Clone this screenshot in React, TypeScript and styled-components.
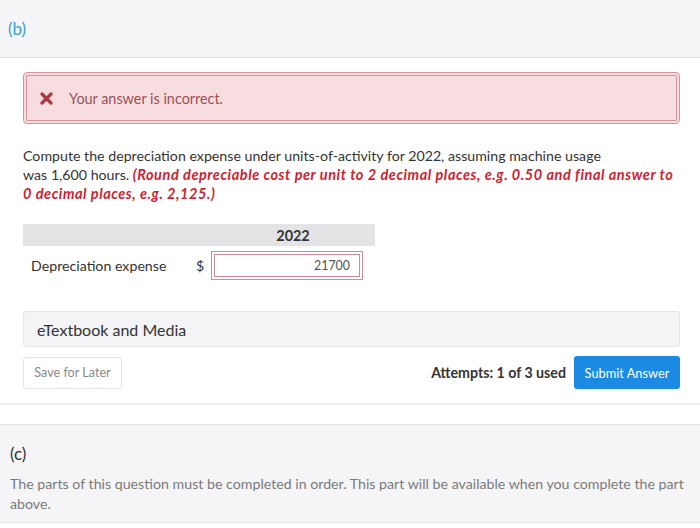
import React from 'react'
import styled, { createGlobalStyle } from 'styled-components'

const GlobalStyle = createGlobalStyle`
  body {
    margin: 0;
    background: #ffffff;
    font-family: Lato, 'Open Sans', sans-serif;
    color: #333333;
  }
`

const Page = styled.div`
  width: 700px;
  height: 528px;
  overflow: hidden;
`

const PartHeader = styled.div`
  height: 57px;
  display: flex;
  align-items: center;
  padding-left: 8px;
  background-color: #f5f5f7;
  border-bottom: 1px solid #e4e4e7;
  color: #3b9ec9;
  font-size: 17px;
`

const PartBody = styled.section`
  padding: 14px 20px 0 23px;
  border-bottom: 2px solid #ececee;
  height: 347px;
  box-sizing: border-box;
`

const ErrorBox = styled.div`
  height: 52px;
  box-sizing: border-box;
  display: flex;
  align-items: center;
  gap: 16px;
  padding-left: 13px;
  border: 4px double #d4939b;
  border-radius: 4px;
  background-color: #f7dde0;
  color: #9c5058;
  font-size: 14.4px;
`

const Prompt = styled.p`
  margin: 22px -12px 0 0;
  font-size: 14.2px;
  line-height: 19px;
  color: #333333;
`

const HintLine = styled.span`
  white-space: nowrap;
`

const Hint = styled.strong`
  font-style: italic;
  font-size: 14.5px;
  line-height: 19px;
  letter-spacing: 0.55px;
  color: #d0212f;
`

const Table = styled.div`
  margin-top: 21px;
  width: 352px;
  display: grid;
  grid-template-columns: 166px 22px 164px;
`

const HeadCell = styled.div`
  height: 22px;
  background-color: #e4e4e6;
  display: flex;
  align-items: center;
  justify-content: center;
  font-weight: 700;
  font-size: 14.4px;
  color: #333333;
`

const RowLabel = styled.div`
  display: flex;
  align-items: center;
  height: 38px;
  padding-left: 8px;
  font-size: 14.2px;
`

const Dollar = styled.div`
  display: flex;
  align-items: center;
  height: 38px;
  padding-left: 7px;
  font-size: 14.2px;
`

const InputWrap = styled.div`
  display: flex;
  align-items: center;
  height: 38px;
`

const AnswerInput = styled.div`
  width: 152px;
  height: 29px;
  box-sizing: border-box;
  border: 4px double #d08a94;
  display: flex;
  align-items: center;
  justify-content: flex-end;
  padding-right: 9px;
  font-size: 12.4px;
  color: #555555;
`

const MediaBar = styled.div`
  margin-top: 27px;
  height: 36px;
  box-sizing: border-box;
  border: 1px solid #e6e6e8;
  border-radius: 3px;
  background-color: #f4f4f6;
  display: flex;
  align-items: center;
  padding-left: 13px;
  font-size: 16px;
  color: #333333;
`

const Actions = styled.div`
  margin-top: 9px;
  display: flex;
  align-items: center;
`

const SaveButton = styled.button`
  width: 99px;
  height: 32px;
  background: #ffffff;
  border: 1px solid #e2e2e4;
  border-radius: 3px;
  font-family: inherit;
  font-size: 12.6px;
  color: #8a8a8a;
  padding: 0;
`

const Attempts = styled.span`
  margin-left: auto;
  margin-right: 8px;
  font-weight: 700;
  font-size: 14.2px;
  color: #333333;
`

const SubmitButton = styled.button`
  width: 106px;
  height: 33px;
  border: none;
  border-radius: 3px;
  background-color: #1a8ae2;
  color: #ffffff;
  font-family: inherit;
  font-size: 12.8px;
  padding: 0;
`

const Gap = styled.div`
  height: 19px;
`

const NextPart = styled.section`
  background-color: #f5f5f7;
  border-top: 1px solid #e6e6e8;
  border-bottom: 1px solid #e6e6e8;
  padding: 18px 2px 10px 10px;
  height: 99px;
  box-sizing: border-box;
`

const PartLabel = styled.div`
  font-size: 17px;
  color: #333333;
`

const Locked = styled.p`
  margin: 10px 0 0;
  font-size: 14.2px;
  line-height: 20px;
  color: #7a7a7a;
`

const CrossIcon = () => (
  <svg width="13" height="13" viewBox="0 0 13 13" aria-hidden>
    <path d="M2 2 L11 11 M11 2 L2 11" stroke="#a83c44" strokeWidth="3.2" strokeLinecap="round" />
  </svg>
)

export default function App() {
  return (
    <Page>
      <GlobalStyle />
      <PartHeader>(b)</PartHeader>
      <PartBody>
        <ErrorBox>
          <CrossIcon />
          <span>Your answer is incorrect.</span>
        </ErrorBox>
        <Prompt>
          Compute the depreciation expense under units-of-activity for 2022, assuming machine usage
          <br />
          <HintLine>
            was 1,600 hours.{' '}
            <Hint>(Round depreciable cost per unit to 2 decimal places, e.g. 0.50 and final answer to</Hint>
          </HintLine>
          <br />
          <Hint>0 decimal places, e.g. 2,125.)</Hint>
        </Prompt>
        <Table>
          <HeadCell />
          <HeadCell />
          <HeadCell>2022</HeadCell>
          <RowLabel>Depreciation expense</RowLabel>
          <Dollar>$</Dollar>
          <InputWrap>
            <AnswerInput>21700</AnswerInput>
          </InputWrap>
        </Table>
        <MediaBar>eTextbook and Media</MediaBar>
        <Actions>
          <SaveButton>Save for Later</SaveButton>
          <Attempts>Attempts: 1 of 3 used</Attempts>
          <SubmitButton>Submit Answer</SubmitButton>
        </Actions>
      </PartBody>
      <Gap />
      <NextPart>
        <PartLabel>(c)</PartLabel>
        <Locked>
          The parts of this question must be completed in order. This part will be available when you
          complete the part above.
        </Locked>
      </NextPart>
    </Page>
  )
}
